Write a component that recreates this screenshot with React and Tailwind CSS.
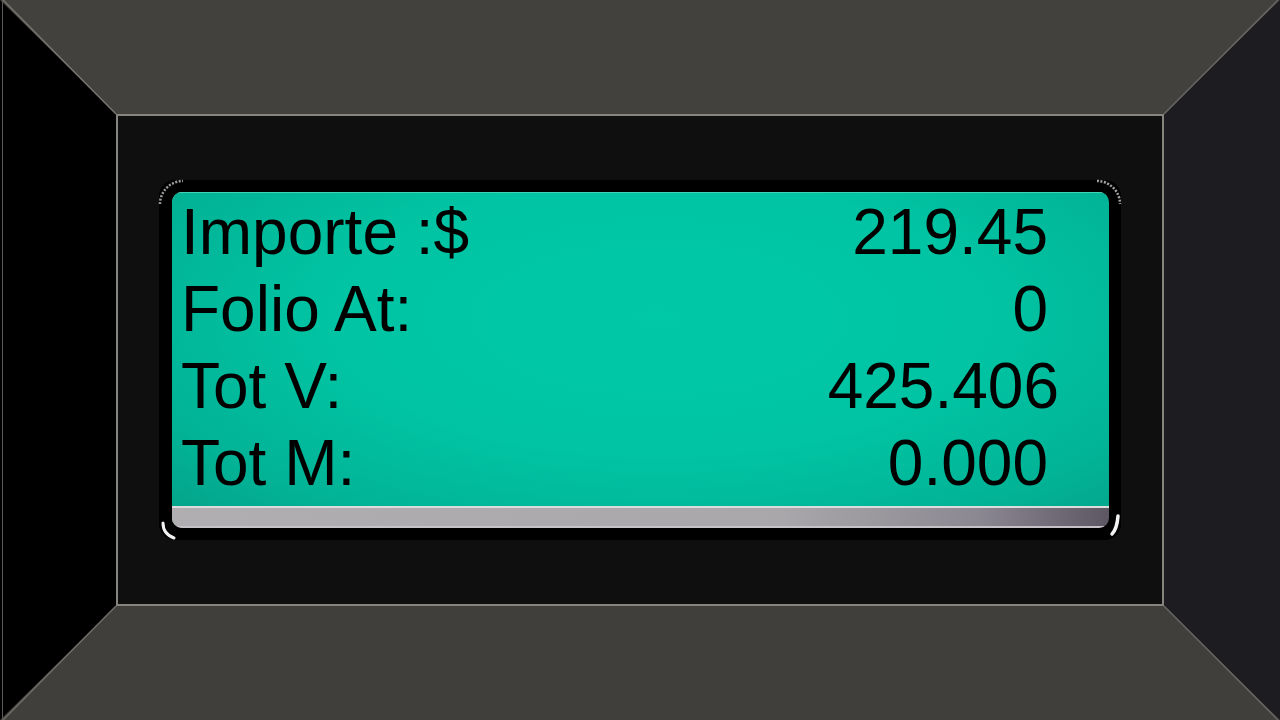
import React from 'react';

const rows = [
  { label: 'Importe :$', value: '219.45', shift: '' },
  { label: 'Folio At:', value: '0', shift: '' },
  { label: 'Tot V:', value: '425.406', shift: 'mr-[-11px]' },
  { label: 'Tot M:', value: '0.000', shift: '' },
];

function CornerMarks() {
  return (
    <svg
      className="pointer-events-none absolute inset-0 h-full w-full overflow-visible"
      viewBox="0 0 962 360"
    >
      <path d="M1 24 A23 23 0 0 1 24 1" fill="none" stroke="#9c9c9c" strokeWidth="2.5" strokeDasharray="2 1.5" />
      <path d="M938 1 A23 23 0 0 1 961 24" fill="none" stroke="#a4a4a4" strokeWidth="2.5" strokeDasharray="2 1.5" />
      <path d="M4 343 Q4 354 15 358" fill="none" stroke="#f2f2f2" strokeWidth="3" strokeLinecap="round" />
      <path d="M959 336 Q958 349 953 354" fill="none" stroke="#f2f2f2" strokeWidth="3.5" strokeLinecap="round" />
    </svg>
  );
}

function Lcd() {
  return (
    <div className="relative h-[360px] w-[962px] rounded-[16px] bg-black pb-3 pl-[13px] pr-3 pt-3">
      <div className="flex h-full flex-col overflow-hidden rounded-[10px] shadow-[inset_1px_1px_0_#9fe8d8]">
        {/* teal glass */}
        <div className="flex-1 border-t border-[#3fd4b6] bg-[radial-gradient(100%_125%_at_52%_40%,#00c9a8_0%,#00c4a3_35%,#02b396_58%,#059c84_78%,#067060_100%)] pl-[9px] pr-[61px] pt-[1px] text-black">
          {rows.map((row) => (
            <div key={row.label} className="flex items-baseline justify-between text-[64px] leading-[77px]">
              <span>{row.label}</span>
              <span className={row.shift}>{row.value}</span>
            </div>
          ))}
        </div>
        {/* silver lip */}
        <div className="h-[22px] border-t-2 border-[#dcdcdc] bg-[linear-gradient(to_right,#b0aeb0,#a9a7aa_65%,#8c8892_86%,#5c5763)] shadow-[inset_0_-2px_0_#c4c2c6]" />
      </div>
      <CornerMarks />
    </div>
  );
}

export default function App() {
  return (
    <div className="relative h-[720px] w-[1280px] overflow-hidden bg-black font-['Liberation_Sans',Arial,sans-serif]">
      <div className="flex h-full w-full border-b-[114px] border-l-[116px] border-r-[116px] border-t-[114px] border-b-[#413f3b] border-l-black border-r-[#1d1d21] border-t-[#43413d]">
        <div className="flex flex-1 items-center justify-center border-2 border-[#86847e] bg-[#0f0f0f]">
          <Lcd />
        </div>
      </div>

      {/* bevel mitre highlights */}
      <svg className="pointer-events-none absolute inset-0 h-full w-full" viewBox="0 0 1280 720">
        <line x1="3" y1="0" x2="116" y2="114" stroke="#77756f" strokeWidth="1.5" />
        <line x1="1278" y1="0" x2="1164" y2="114" stroke="#6a6864" strokeWidth="1.5" />
        <line x1="3" y1="720" x2="116" y2="606" stroke="#6f6d68" strokeWidth="1.5" />
        <line x1="1278" y1="720" x2="1164" y2="606" stroke="#6a6864" strokeWidth="1.5" />
        <line x1="2.5" y1="0" x2="2.5" y2="720" stroke="#5a5956" strokeWidth="1" />
      </svg>
    </div>
  );
}
